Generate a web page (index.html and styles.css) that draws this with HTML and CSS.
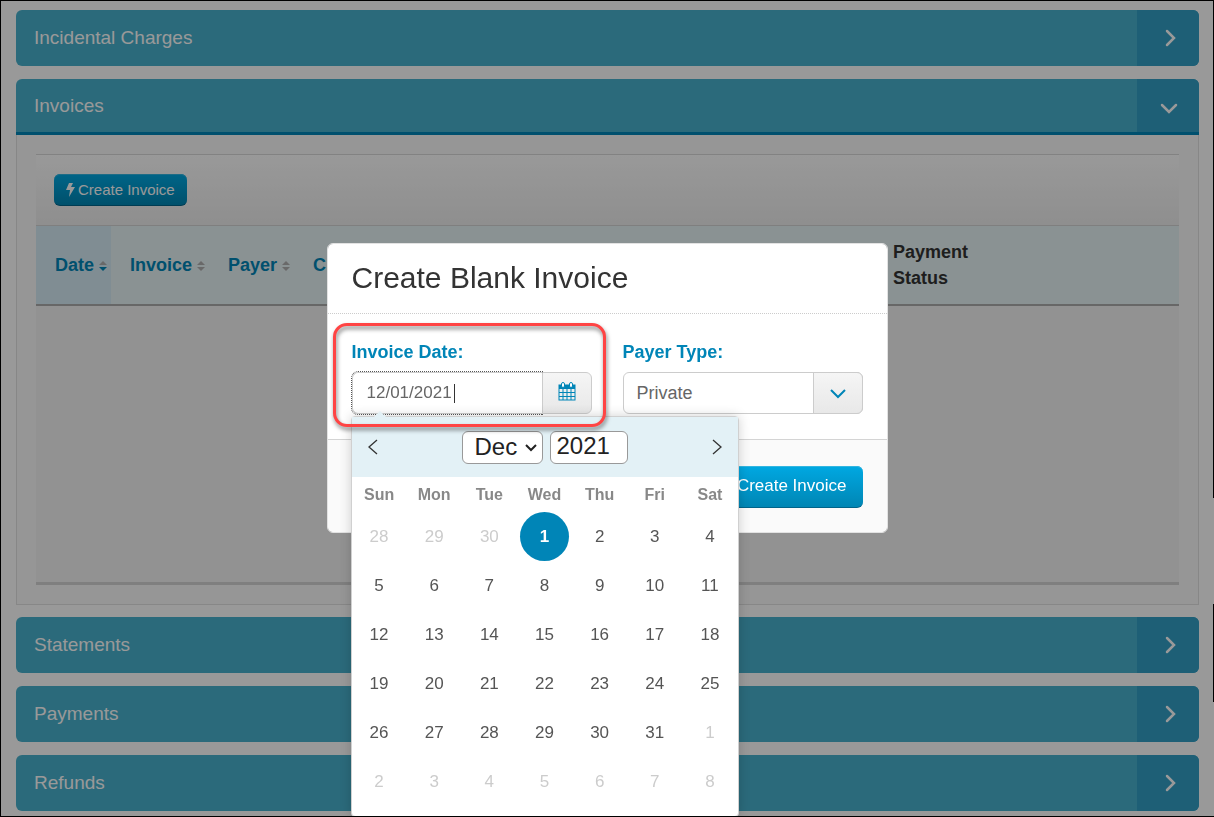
FILE: index.html
```html
<!doctype html>
<html lang="en">
<head>
  <meta charset="UTF-8">
  <title>Billing</title>
  <link rel="stylesheet" href="styles.css">
</head>
<body>
  <main class="page">
    <button type="button" class="bar">
      <span class="bar-title">Incidental Charges</span>
      <span class="bar-toggle"><svg width="12" height="20" viewBox="0 0 12 20"><path d="M2 3l7 7-7 7"/></svg></span>
    </button>
    <button type="button" class="bar open">
      <span class="bar-title">Invoices</span>
      <span class="bar-toggle"><svg width="20" height="12" viewBox="0 0 20 12"><path d="M3 2l7 7 7-7"/></svg></span>
    </button>
    <section class="panel">
      <div class="toolbar">
        <button type="button" class="btn btn-small">
          <svg width="9" height="14" viewBox="0 0 9 14"><path d="M3 0h4L5 4h4L3 14l1-7H0z"/></svg>
          Create Invoice
        </button>
      </div>
      <table class="invoices">
        <thead>
          <tr>
            <th class="col-date sorted">Date <svg class="sort" width="8" height="12" viewBox="0 0 8 12"><path d="M0 5l4-4 4 4z"/><path class="on" d="M0 7h8l-4 4z"/></svg></th>
            <th class="col-invoice">Invoice <svg class="sort" width="8" height="12" viewBox="0 0 8 12"><path d="M0 5l4-4 4 4z"/><path d="M0 7h8l-4 4z"/></svg></th>
            <th class="col-payer">Payer <svg class="sort" width="8" height="12" viewBox="0 0 8 12"><path d="M0 5l4-4 4 4z"/><path d="M0 7h8l-4 4z"/></svg></th>
            <th>C</th>
            <th class="col-status">Payment<br>Status</th>
          </tr>
        </thead>
      </table>
      <div class="no-rows"></div>
    </section>
    <button type="button" class="bar">
      <span class="bar-title">Statements</span>
      <span class="bar-toggle"><svg width="12" height="20" viewBox="0 0 12 20"><path d="M2 3l7 7-7 7"/></svg></span>
    </button>
    <button type="button" class="bar">
      <span class="bar-title">Payments</span>
      <span class="bar-toggle"><svg width="12" height="20" viewBox="0 0 12 20"><path d="M2 3l7 7-7 7"/></svg></span>
    </button>
    <button type="button" class="bar">
      <span class="bar-title">Refunds</span>
      <span class="bar-toggle"><svg width="12" height="20" viewBox="0 0 12 20"><path d="M2 3l7 7-7 7"/></svg></span>
    </button>
  </main>

  <div class="backdrop">
    <form class="modal" role="dialog" aria-labelledby="modal-title">
      <h2 class="modal-title" id="modal-title">Create Blank Invoice</h2>
      <div class="modal-body">
        <div class="field">
          <label for="invoice-date">Invoice Date:</label>
          <div class="control">
            <input type="text" class="date-input" id="invoice-date" value="12/01/2021" autocomplete="off" autofocus>
            <button type="button" class="addon" aria-label="Open calendar">
              <svg width="18" height="19" viewBox="0 0 18 19">
                <path class="fill" d="M1 3h16v4H1z"/>
                <rect class="line" x="1" y="3" width="16" height="15"/>
                <path class="line" d="M1 10.500h16M1 14.500h16M5 7v11M9 7v11M13 7v11"/>
                <rect class="ring" x="3.500" y="0.500" width="3" height="5" rx="1.500"/>
                <rect class="ring" x="11.500" y="0.500" width="3" height="5" rx="1.500"/>
              </svg>
            </button>
            <div class="picker">
              <div class="picker-head">
                <button type="button" class="picker-nav" aria-label="Previous month"><svg width="10" height="16" viewBox="0 0 10 16"><path d="M9 1L1 8l8 7"/></svg></button>
                <div class="picker-selects">
                  <div class="month">
                    <select aria-label="Month">
                      <option>Dec</option>
                    </select>
                    <svg width="12" height="8" viewBox="0 0 12 8"><path d="M1 1l5 5 5-5"/></svg>
                  </div>
                  <input type="number" class="year" aria-label="Year" value="2021">
                </div>
                <button type="button" class="picker-nav" aria-label="Next month"><svg width="10" height="16" viewBox="0 0 10 16"><path d="M1 1l8 7-8 7"/></svg></button>
              </div>
              <table class="days">
                <thead>
                  <tr><th>Sun</th><th>Mon</th><th>Tue</th><th>Wed</th><th>Thu</th><th>Fri</th><th>Sat</th></tr>
                </thead>
                <tbody>
                  <tr>
                    <td><button type="button" class="day other">28</button></td>
                    <td><button type="button" class="day other">29</button></td>
                    <td><button type="button" class="day other">30</button></td>
                    <td><button type="button" class="day selected">1</button></td>
                    <td><button type="button" class="day">2</button></td>
                    <td><button type="button" class="day">3</button></td>
                    <td><button type="button" class="day">4</button></td>
                  </tr>
                  <tr>
                    <td><button type="button" class="day">5</button></td>
                    <td><button type="button" class="day">6</button></td>
                    <td><button type="button" class="day">7</button></td>
                    <td><button type="button" class="day">8</button></td>
                    <td><button type="button" class="day">9</button></td>
                    <td><button type="button" class="day">10</button></td>
                    <td><button type="button" class="day">11</button></td>
                  </tr>
                  <tr>
                    <td><button type="button" class="day">12</button></td>
                    <td><button type="button" class="day">13</button></td>
                    <td><button type="button" class="day">14</button></td>
                    <td><button type="button" class="day">15</button></td>
                    <td><button type="button" class="day">16</button></td>
                    <td><button type="button" class="day">17</button></td>
                    <td><button type="button" class="day">18</button></td>
                  </tr>
                  <tr>
                    <td><button type="button" class="day">19</button></td>
                    <td><button type="button" class="day">20</button></td>
                    <td><button type="button" class="day">21</button></td>
                    <td><button type="button" class="day">22</button></td>
                    <td><button type="button" class="day">23</button></td>
                    <td><button type="button" class="day">24</button></td>
                    <td><button type="button" class="day">25</button></td>
                  </tr>
                  <tr>
                    <td><button type="button" class="day">26</button></td>
                    <td><button type="button" class="day">27</button></td>
                    <td><button type="button" class="day">28</button></td>
                    <td><button type="button" class="day">29</button></td>
                    <td><button type="button" class="day">30</button></td>
                    <td><button type="button" class="day">31</button></td>
                    <td><button type="button" class="day other">1</button></td>
                  </tr>
                  <tr>
                    <td><button type="button" class="day other">2</button></td>
                    <td><button type="button" class="day other">3</button></td>
                    <td><button type="button" class="day other">4</button></td>
                    <td><button type="button" class="day other">5</button></td>
                    <td><button type="button" class="day other">6</button></td>
                    <td><button type="button" class="day other">7</button></td>
                    <td><button type="button" class="day other">8</button></td>
                  </tr>
                </tbody>
              </table>
            </div>
          </div>
        </div>
        <div class="field">
          <label for="payer-type">Payer Type:</label>
          <div class="control">
            <select class="payer-select" id="payer-type">
              <option>Private</option>
            </select>
            <span class="addon payer-arrow"><svg width="18" height="12" viewBox="0 0 18 12"><path class="chevron" d="M2 2l7 7 7-7"/></svg></span>
          </div>
        </div>
        <div class="highlight"></div>
      </div>
      <div class="modal-foot">
        <button type="submit" class="btn">Create Invoice</button>
      </div>
    </form>
  </div>
  <div class="frame"></div>
</body>
</html>
```

FILE: styles.css
```css
* {
  box-sizing: border-box;
}
body {
  margin: 0;
  background: #fff;
  color: #333;
  font-family: "Liberation Sans", Arial, sans-serif;
  font-size: 17px;
}
button, input, select {
  margin: 0;
  font-family: inherit;
  font-size: inherit;
}
svg {
  display: block;
  fill: none;
}

/* accordion */
.page {
  padding: 10px 15px 5px 16px;
}
.bar {
  display: flex;
  width: 100%;
  height: 56px;
  margin-bottom: 13px;
  padding: 0;
  border: 0;
  border-radius: 6px;
  background: #48b1cd;
  color: #fff;
  font-size: 19px;
  text-align: left;
  overflow: hidden;
}
.bar:last-child {
  margin-bottom: 0;
}
.bar-title {
  flex: 1;
  align-self: center;
  padding-left: 18px;
}
.bar-toggle {
  display: flex;
  align-items: center;
  justify-content: center;
  align-self: stretch;
  width: 62px;
  padding-left: 5px;
  background: #329ec5;
}
.bar-toggle path {
  stroke: #fff;
  stroke-width: 2.5;
  stroke-linecap: round;
}
.bar.open {
  margin-bottom: 0;
  border-bottom: 3px solid #0085b7;
  border-radius: 6px 6px 0 0;
}
.bar.open .bar-toggle {
  padding: 7px 0 0 2px;
}
.panel {
  margin-bottom: 12px;
  padding: 19px;
  border: 1px solid #e2e2e2;
  border-top: 0;
  background: #fafafa;
}
.toolbar {
  padding: 19px 18px;
  border-top: 1px solid #d9d9d9;
  background: linear-gradient(#fff, #eee);
}
.btn {
  display: flex;
  align-items: center;
  height: 42px;
  padding: 0 16px 2px;
  border: 0;
  border-bottom: 1px solid #00648a;
  border-radius: 6px;
  background: linear-gradient(#00a8e2, #0086b4);
  box-shadow: inset 0 1px 0 #33b5e0;
  color: #fff;
}
.btn-small {
  gap: 3px;
  height: 32px;
  padding: 0 12px;
  font-size: 15px;
}
.btn-small path {
  fill: #fff;
}
.invoices {
  width: 100%;
  table-layout: fixed;
  border-collapse: separate;
  border-spacing: 0;
}
.invoices th {
  height: 81px;
  padding: 0 0 0 19px;
  border-top: 1px solid #d4d4d4;
  border-bottom: 2px solid #acacac;
  background: #e6f3f5;
  color: #0085b7;
  font-size: 18px;
  line-height: 26px;
  text-align: left;
  white-space: nowrap;
}
.invoices .sorted {
  background: #d5ecf6;
}
.invoices .col-date {
  width: 75px;
}
.invoices .col-invoice {
  width: 98px;
}
.invoices .col-payer {
  width: 85px;
}
.invoices .col-status {
  width: 305px;
  color: #333;
}
.sort {
  display: inline-block;
  vertical-align: -1px;
}
.sort path {
  fill: #b0b0b0;
}
.sort .on {
  fill: #0085b7;
}
.no-rows {
  height: 279px;
  border-bottom: 3px solid #d4d4d4;
  background: #f4f4f4;
}

/* dialog */
.backdrop {
  position: fixed;
  inset: 0;
  padding-top: 243px;
  background: rgba(0, 0, 0, 0.4);
}
.modal {
  width: 561px;
  margin: 0 auto;
  border: 1px solid #e2e2e2;
  border-radius: 6px;
  background: #fff;
  background-clip: padding-box;
}
.modal-title {
  margin: 0;
  padding: 15px 24px 16px;
  border-bottom: 1px dotted #ccc;
  font-size: 30px;
  font-weight: normal;
  line-height: 38px;
}
.modal-body {
  position: relative;
  display: grid;
  grid-template-columns: repeat(2, minmax(0, 1fr));
  gap: 31px;
  padding: 25px 24px;
}
.field label {
  display: block;
  margin-bottom: 7px;
  color: #0085b7;
  font-size: 18px;
  font-weight: bold;
  line-height: 26px;
}
.control {
  position: relative;
  display: flex;
  height: 42px;
}
.date-input {
  flex: 1;
  min-width: 0;
  padding: 0 14px;
  border: 1px solid #ccc;
  border-right: 0;
  border-radius: 6px 0 0 6px;
  background: #fff;
  color: #666;
  caret-color: transparent;
}
/* steady caret after the typed date */
.date-input:focus {
  outline: 1px dotted #555;
  background: linear-gradient(#333, #333) 101px center / 1px 19px no-repeat #fff;
}
.addon {
  display: flex;
  flex-shrink: 0;
  align-items: center;
  justify-content: center;
  width: 50px;
  padding: 0 0 4px;
  border: 1px solid #ccc;
  border-radius: 0 6px 6px 0;
  background: linear-gradient(#f5f5f5, #e8e8e8);
}
.addon .fill {
  fill: #0085b7;
}
.addon .line {
  stroke: #0085b7;
  stroke-width: 1;
}
.addon .ring {
  fill: #fff;
  stroke: #0085b7;
}
.payer-select {
  width: 100%;
  padding: 0 62px 0 13px;
  border: 1px solid #ccc;
  border-radius: 6px;
  background: #fff;
  color: #666;
  font-size: 18px;
  appearance: none;
}
.payer-arrow {
  position: absolute;
  top: 0;
  right: 0;
  height: 100%;
  padding: 2px 0 0;
  pointer-events: none;
}
.chevron {
  stroke: #0085b7;
  stroke-width: 2;
}
.modal-foot {
  display: flex;
  justify-content: flex-end;
  padding: 26px 24px 24px;
  border-top: 1px solid #d4d4d4;
  border-radius: 0 0 6px 6px;
  background: #fafafa;
}

/* date picker */
.picker {
  position: absolute;
  top: calc(100% + 2px);
  left: -1px;
  z-index: 2;
  width: 388px;
  padding-bottom: 10px;
  border: 1px solid #d0d0d0;
  border-radius: 4px;
  background: #fff;
  box-shadow: 0 0 12px rgba(0, 0, 0, 0.18);
}
.picker::before {
  content: "";
  position: absolute;
  top: -6px;
  left: 22px;
  border: 6px solid transparent;
  border-top: 0;
  border-bottom-color: #e3f1f6;
}
.picker-head {
  display: flex;
  align-items: center;
  justify-content: space-between;
  height: 60px;
  padding: 0 6px;
  background: #e3f1f6;
}
.picker-nav {
  display: flex;
  align-items: center;
  justify-content: center;
  width: 30px;
  height: 30px;
  padding: 0;
  border: 0;
  background: none;
}
.picker-nav path {
  stroke: #333;
  stroke-width: 1.3;
}
.picker-selects {
  display: flex;
  gap: 7px;
}
.month {
  position: relative;
}
.month svg {
  position: absolute;
  top: 13px;
  right: 6px;
  pointer-events: none;
}
.month path {
  stroke: #222;
  stroke-width: 2;
}
.month select, .year {
  display: block;
  height: 33px;
  border: 1px solid #999;
  border-radius: 6px;
  background: #fff;
  color: #222;
  font-size: 24px;
  appearance: none;
}
.month select {
  width: 81px;
  padding: 0 0 2px 12px;
}
.year {
  width: 78px;
  padding: 0 6px 2px;
  appearance: textfield;
}
.year::-webkit-inner-spin-button {
  display: none;
}
.days {
  width: 100%;
  table-layout: fixed;
  border-collapse: collapse;
  text-align: center;
}
.days th, .days td {
  padding: 0;
}
.days th {
  height: 35px;
  color: #888;
  font-size: 16px;
}
.day {
  display: block;
  width: 49px;
  height: 49px;
  margin: 0 auto;
  padding: 0;
  border: 0;
  border-radius: 50%;
  background: none;
  color: #555;
}
.day.other {
  color: #ccc;
}
.day.selected {
  background: #0085b7;
  color: #fff;
  font-weight: bold;
}

/* red marker round the date field */
.highlight {
  position: absolute;
  top: 9px;
  left: 5px;
  z-index: 3;
  width: 273px;
  height: 104px;
  border: 3px solid #f44;
  border-radius: 14px;
  filter: drop-shadow(1px 3px 2px rgba(0, 0, 0, 0.5));
  pointer-events: none;
}

/* thin page outline, broken on the right side */
.frame {
  position: fixed;
  inset: 0;
  z-index: 4;
  border: 1px solid #000;
  border-right: 0;
  pointer-events: none;
}
.frame::after {
  content: "";
  position: absolute;
  top: 0;
  right: 0;
  width: 1px;
  height: 100%;
  background: linear-gradient(#000 61%, transparent 61%, transparent 74%, #000 74%, #000 86%, transparent 86%);
}
```
